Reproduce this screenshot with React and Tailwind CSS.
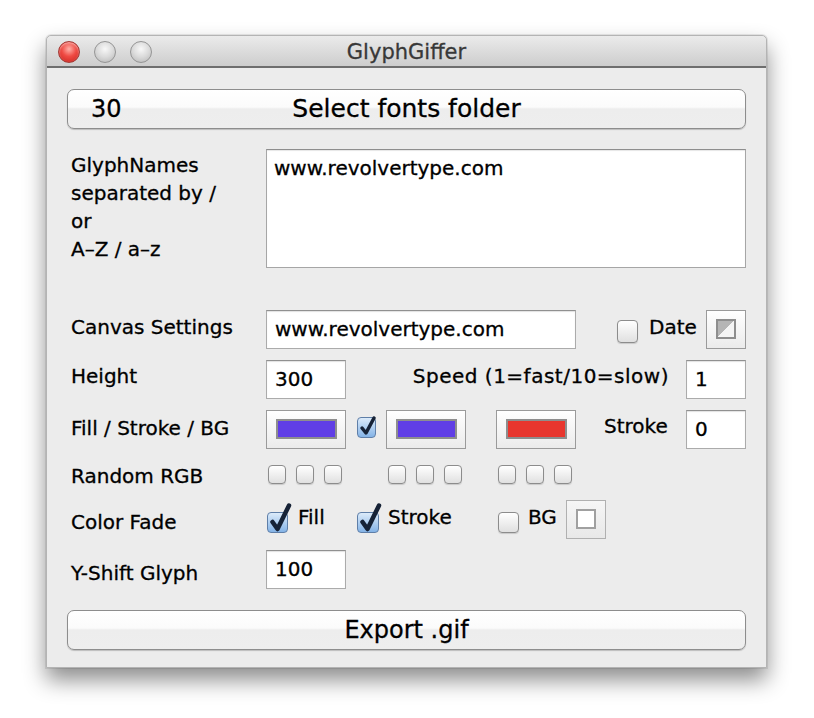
import React from "react";

function TextBox({ className = "", children }) {
  return (
    <div
      className={
        "h-[39px] bg-white border border-[#ababab] border-t-[#909090] shadow-[inset_0_1px_1px_rgba(0,0,0,0.12)] flex items-center pl-[8px] text-[20px] text-black " +
        className
      }
    >
      {children}
    </div>
  );
}

function ColorWell({ color }) {
  return (
    <div className="w-[80px] h-[39px] border border-[#9a9a9a] bg-gradient-to-b from-white to-[#ebebeb] flex items-center justify-center shrink-0">
      <div className="w-[61px] h-[20px] border-2 border-[#8e8e8e]" style={{ background: color }} />
    </div>
  );
}

function Box({ className = "" }) {
  return (
    <div
      className={
        "rounded-[4px] border border-[#8c8c8c] bg-gradient-to-b from-white to-[#e0e0e0] shadow-[0_1px_1px_rgba(0,0,0,0.15)] shrink-0 " +
        className
      }
    />
  );
}

function Checked({ className = "", big = true }) {
  return (
    <div
      className={
        "relative rounded-[4px] border border-[#5f7fa8] bg-gradient-to-b from-[#dcebfa] to-[#84b3e6] shrink-0 " +
        className
      }
    >
      {big ? (
        <svg className="absolute left-[1px] top-[-11px]" width="24" height="32" viewBox="0 0 24 32">
          <path d="M3.5 20 L8.5 27 L20 3.5" fill="none" stroke="#162236" strokeWidth="4.5" strokeLinecap="round" strokeLinejoin="round" />
        </svg>
      ) : (
        <svg className="absolute left-[1px] top-[-3px]" width="18" height="22" viewBox="0 0 18 22">
          <path d="M3 13 L7 18 L15 3" fill="none" stroke="#162236" strokeWidth="3.5" strokeLinecap="round" strokeLinejoin="round" />
        </svg>
      )}
    </div>
  );
}

function Light({ red }) {
  return red ? (
    <div className="w-[22px] h-[22px] rounded-full border border-[#a23b36] bg-[radial-gradient(circle_at_50%_35%,#ffb0a8_0%,#ef4b44_45%,#c8201a_100%)] shadow-[inset_0_1px_2px_rgba(255,255,255,0.6)]" />
  ) : (
    <div className="w-[22px] h-[22px] rounded-full border border-[#959595] bg-[radial-gradient(circle_at_50%_35%,#f8f8f8_0%,#dadada_50%,#b4b4b4_100%)]" />
  );
}

function Label({ children, className = "" }) {
  return <div className={"w-[199px] pl-[4px] shrink-0 text-[20px] text-black " + className}>{children}</div>;
}

function AquaButton({ children, left }) {
  return (
    <div className="relative h-[40px] rounded-[7px] border border-[#8d8d8d] bg-[linear-gradient(to_bottom,#ffffff_0%,#fbfbfb_45%,#ededed_50%,#eeeeee_100%)] shadow-[0_1px_1px_rgba(0,0,0,0.2)] flex items-center justify-center text-[24px] text-black">
      {left && <span className="absolute left-[23px] top-0 h-full flex items-center">{left}</span>}
      <span>{children}</span>
    </div>
  );
}

export default function App() {
  return (
    <div className="w-[814px] h-[718px] bg-white overflow-hidden font-['DejaVu_Sans','Liberation_Sans',sans-serif] [-webkit-text-stroke:0.3px_currentColor]">
      <div className="ml-[46px] mt-[35px] w-[721px] h-[633px] bg-[#ececec] border border-[#b4b4b4] rounded-t-[5px] shadow-[0_0_0_1px_rgba(0,0,0,0.08),0_12px_22px_rgba(0,0,0,0.45)] flex flex-col">
        <div className="relative h-[32px] rounded-t-[5px] bg-gradient-to-b from-[#ebebeb] to-[#cdcdcd] border-b-2 border-[#6e6e6e] flex items-center shrink-0">
          <div className="flex gap-[14px] pl-[11px] translate-y-[1px]">
            <Light red />
            <Light />
            <Light />
          </div>
          <div className="absolute inset-0 flex items-center justify-center text-[21px] text-[#383838] translate-y-[2px]">GlyphGiffer</div>
        </div>

        <div className="px-[20px] pt-[21px] flex flex-col">
          <AquaButton left="30">
            <span className="text-[25px]">Select fonts folder</span>
          </AquaButton>

          <div className="flex mt-[20px]">
            <Label className="leading-[28px] pt-[2px]">
              GlyphNames
              <br />
              separated by /
              <br />
              or
              <br />
              A–Z / a–z
            </Label>
            <div className="flex-1 h-[119px] bg-white border border-[#a6a6a6] border-t-[#8e8e8e] shadow-[inset_0_1px_1px_rgba(0,0,0,0.1)] pl-[7px] pt-[5px] text-[20px] leading-[26px]">
              www.revolvertype.com
            </div>
          </div>

          <div className="flex items-center h-[40px] mt-[41px]">
            <Label className="-translate-y-[2px]">Canvas Settings</Label>
            <TextBox className="w-[310px]">www.revolvertype.com</TextBox>
            <Box className="ml-[41px] w-[21px] h-[23px] mt-[4px]" />
            <span className="ml-[11px] text-[20px] -translate-y-[2px]">Date</span>
            <div className="ml-auto w-[40px] h-[39px] border border-[#9a9a9a] bg-gradient-to-b from-white to-[#ebebeb] flex items-center justify-center">
              <div className="w-[20px] h-[20px] border-2 border-[#8e8e8e] bg-[linear-gradient(to_bottom_right,#b5b5b5_50%,#f4f4f4_50%)]" />
            </div>
          </div>

          <div className="flex items-center h-[40px] mt-[10px]">
            <Label className="-translate-y-[3px]">Height</Label>
            <TextBox className="w-[80px]">300</TextBox>
            <span className="ml-auto text-[20px] tracking-[0.5px] -translate-y-[3px]">Speed (1=fast/10=slow)</span>
            <TextBox className="ml-[17px] w-[60px]">1</TextBox>
          </div>

          <div className="flex items-center h-[40px] mt-[10px]">
            <Label className="-translate-y-[1px]">Fill / Stroke / BG</Label>
            <ColorWell color="#603ee6" />
            <Checked big={false} className="ml-[11px] w-[19px] h-[21px] -mt-[4px]" />
            <div className="ml-[10px]">
              <ColorWell color="#603ee6" />
            </div>
            <div className="ml-[30px]">
              <ColorWell color="#e8362e" />
            </div>
            <span className="ml-[28px] text-[20px] -translate-y-[3px]">Stroke</span>
            <TextBox className="ml-auto w-[60px]">0</TextBox>
          </div>

          <div className="flex items-center h-[40px] mt-[5px]">
            <Label className="translate-y-[2px]">Random RGB</Label>
            <div className="flex gap-[10px] ml-[2px]">
              <Box className="w-[18px] h-[19px]" />
              <Box className="w-[18px] h-[19px]" />
              <Box className="w-[18px] h-[19px]" />
            </div>
            <div className="flex gap-[10px] ml-[46px]">
              <Box className="w-[18px] h-[19px]" />
              <Box className="w-[18px] h-[19px]" />
              <Box className="w-[18px] h-[19px]" />
            </div>
            <div className="flex gap-[10px] ml-[36px]">
              <Box className="w-[18px] h-[19px]" />
              <Box className="w-[18px] h-[19px]" />
              <Box className="w-[18px] h-[19px]" />
            </div>
          </div>

          <div className="flex items-center h-[40px] mt-[5px]">
            <Label className="translate-y-[3px]">Color Fade</Label>
            <div className="w-[91px] flex items-center">
              <Checked className="ml-[1px] w-[21px] h-[21px] mt-[6px]" />
              <span className="ml-[10px] text-[20px] -mt-[4px]">Fill</span>
            </div>
            <div className="w-[141px] flex items-center">
              <Checked className="w-[22px] h-[21px] mt-[6px]" />
              <span className="ml-[9px] text-[20px] -mt-[4px]">Stroke</span>
            </div>
            <div className="w-[68px] flex items-center">
              <Box className="w-[21px] h-[21px] mt-[6px]" />
              <span className="ml-[9px] text-[20px] -mt-[4px]">BG</span>
            </div>
            <div className="w-[40px] h-[39px] border border-[#b0b0b0] bg-gradient-to-b from-[#f6f6f6] to-[#e8e8e8] flex items-center justify-center">
              <div className="w-[20px] h-[20px] border-2 border-[#a0a0a0] bg-white" />
            </div>
          </div>

          <div className="flex items-center h-[40px] mt-[10px]">
            <Label className="translate-y-[4px]">Y-Shift Glyph</Label>
            <TextBox className="w-[80px]">100</TextBox>
          </div>

          <div className="mt-[21px]">
            <AquaButton>Export .gif</AquaButton>
          </div>
        </div>
      </div>
    </div>
  );
}
